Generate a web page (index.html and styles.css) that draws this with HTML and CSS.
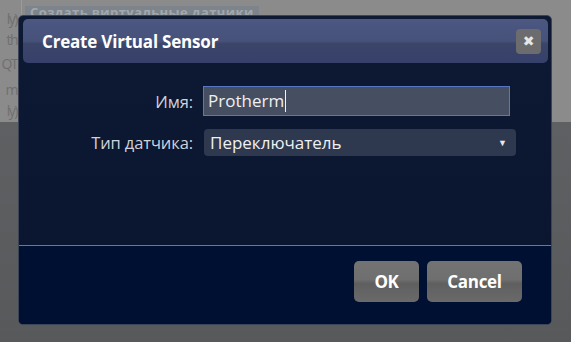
FILE: index.html
```html
<!DOCTYPE html>
<html lang="ru">
<head>
  <meta charset="UTF-8" />
  <title>Create Virtual Sensor</title>
  <link rel="stylesheet" href="styles.css">
</head>
<body>

<div class="page-top">
  <div class="side-col">
    <span>ly)</span>
    <span>th</span>
    <span>QT</span>
    <span>m</span>
    <span>ly)</span>
  </div>
  <div class="main-col">
    <div class="tab-title">Создать виртуальные датчики</div>
  </div>
</div>

<div class="dialog">
  <div class="dialog-header">
    <h2>Create Virtual Sensor</h2>
    <div class="close-btn">&#x2716;</div>
  </div>

  <div class="dialog-body">
    <div class="form-grid">
      <label>Имя:</label>
      <div class="text-input">Protherm<span class="caret"></span></div>
      <label>Тип датчика:</label>
      <div class="select-input">
        <span>Переключатель</span>
        <span class="arrow">&#9660;</span>
      </div>
    </div>
  </div>

  <div class="dialog-footer">
    <button type="button" class="ok">OK</button>
    <button type="button">Cancel</button>
  </div>
</div>

</body>
</html>
```

FILE: styles.css
```css
body {
  margin: 0;
  width: 571px;
  height: 342px;
  overflow: hidden;
  position: relative;
  background: linear-gradient(to bottom, #636467, #58595b);
  font-family: 'Open Sans', 'Liberation Sans', sans-serif;
}
.page-top {
  height: 122px;
  background: #8b8b8b;
  display: flex;
}
.side-col {
  width: 17px;
  padding-right: 4px;
  border-right: 1px solid #9b9b9b;
  display: flex;
  flex-direction: column;
  align-items: flex-end;
  padding-top: 10px;
  font-size: 14px;
  color: #6f6f6f;
  line-height: 17px;
}
.side-col span {
  white-space: nowrap;
  margin-bottom: 4px;
  letter-spacing: -1.5px;
}
.side-col span:nth-child(3) { margin-top: 3px; margin-bottom: 9px; }
.main-col {
  flex: 1;
  padding-left: 3px;
}
.tab-title {
  display: inline-block;
  height: 15px;
  background: #7e848b;
  color: #a2a8ae;
  font-weight: 700;
  font-size: 13px;
  line-height: 13px;
  padding: 0 5px;
  white-space: nowrap;
  letter-spacing: 0.4px;
}

/* dialog */
.dialog {
  position: absolute;
  left: 18px;
  top: 15px;
  width: 532px;
  height: 308px;
  border: 1px solid #3c4458;
  border-radius: 5px;
  background: linear-gradient(to bottom, #0e1933, #09142f);
  display: flex;
  flex-direction: column;
  overflow: hidden;
}
.dialog-header {
  margin: 3px 3px 0 4px;
  height: 44px;
  border-radius: 5px;
  background: linear-gradient(to bottom, #4c5782 0%, #47527b 50%, #3b4569 56%, #37406a 100%);
  display: flex;
  align-items: center;
  justify-content: space-between;
  padding: 0 7px 0 19px;
}
.dialog-header h2 {
  margin: 0;
  color: #ffffff;
  font-size: 17px;
  font-weight: 700;
  letter-spacing: -0.2px;
}
.close-btn {
  width: 25px;
  height: 25px;
  border-radius: 4px;
  background: #6c6c6e;
  color: #e6e6e6;
  font-size: 14px;
  display: flex;
  align-items: center;
  justify-content: center;
  font-family: 'DejaVu Sans', sans-serif;
}
.dialog-body {
  flex: 1;
  padding-top: 23px;
  border-bottom: 1px solid #6f7789;
}
.form-grid {
  display: grid;
  grid-template-columns: 174px 313px;
  column-gap: 10px;
  row-gap: 13px;
  align-items: center;
}
.form-grid label {
  text-align: right;
  color: #cfd2d8;
  font-size: 16.5px;
  letter-spacing: -0.1px;
}
.text-input {
  width: 307px;
  height: 30px;
  box-sizing: border-box;
  border: 1px solid #5577c4;
  background: #464e62;
  color: #f0f0f0;
  font-size: 17px;
  line-height: 28px;
  padding-left: 4px;
  display: flex;
  align-items: center;
}
.caret {
  display: inline-block;
  width: 1px;
  height: 22px;
  background: #f2f2f2;
  margin-left: 1px;
}
.select-input {
  height: 27px;
  border-radius: 4px;
  background: #2e384f;
  color: #f0f0f0;
  font-size: 17px;
  display: flex;
  align-items: center;
  justify-content: space-between;
  padding: 0 9px 0 6px;
  margin-left: 1px;
}
.arrow {
  font-size: 9px;
  color: #e8e8e8;
}
.dialog-footer {
  height: 78px;
  background: #001033;
  display: flex;
  justify-content: flex-end;
  align-items: flex-start;
  gap: 8px;
  padding: 15px 29px 0 0;
  box-sizing: border-box;
}
.dialog-footer button {
  height: 41px;
  width: 95px;
  border: none;
  border-radius: 5px;
  background: linear-gradient(to bottom, #737373 0%, #6f6f6f 45%, #5f5f5f 55%, #6a6a6a 100%);
  color: #ffffff;
  font-family: 'Open Sans', 'Liberation Sans', sans-serif;
  font-size: 17px;
  font-weight: 700;
  letter-spacing: -0.3px;
  cursor: pointer;
}
.dialog-footer button.ok {
  width: 65px;
}
```
